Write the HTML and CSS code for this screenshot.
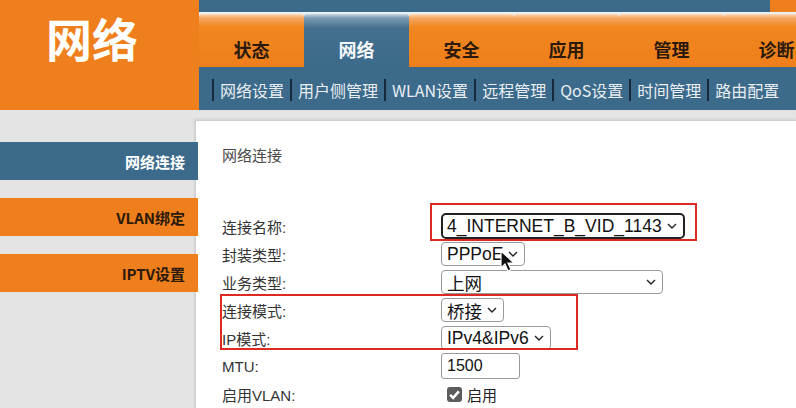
FILE: index.html
```html
<!DOCTYPE html>
<html lang="zh-CN">
<head>
    <meta charset="UTF-8">
    <title>网络</title>
    <link rel="stylesheet" href="styles.css">
</head>
<body>
    <!-- Header: logo block + main tabs + sub menu -->
    <header class="top">
        <div class="logo">网络</div>
        <div class="nav">
            <div class="nav-strip"><span class="strip-corner"></span></div>
            <ul class="tabs">
                <li class="tab">状态</li>
                <li class="tab active">网络</li>
                <li class="tab">安全</li>
                <li class="tab">应用</li>
                <li class="tab">管理</li>
                <li class="tab">诊断</li>
            </ul>
            <ul class="subnav">
                <li>网络设置</li>
                <li>用户侧管理</li>
                <li>WLAN设置</li>
                <li>远程管理</li>
                <li>QoS设置</li>
                <li>时间管理</li>
                <li>路由配置</li>
            </ul>
        </div>
    </header>

    <div class="main">
        <!-- Left menu -->
        <ul class="side">
            <li class="side-item current">网络连接</li>
            <li class="side-item">VLAN绑定</li>
            <li class="side-item">IPTV设置</li>
        </ul>

        <!-- Form panel -->
        <div class="panel">
            <h3 class="panel-title">网络连接</h3>
            <div class="form">
                <div class="row">
                    <span class="label">连接名称:</span>
                    <div class="select focus">4_INTERNET_B_VID_1143<svg class="chev" viewBox="0 0 10 6"><path d="M1 1l4 4 4-4"/></svg></div>
                </div>
                <div class="row">
                    <span class="label">封装类型:</span>
                    <div class="select">PPPoE<svg class="chev" viewBox="0 0 10 6"><path d="M1 1l4 4 4-4"/></svg></div>
                </div>
                <div class="row">
                    <span class="label">业务类型:</span>
                    <div class="select wide">上网<svg class="chev" viewBox="0 0 10 6"><path d="M1 1l4 4 4-4"/></svg></div>
                </div>
                <div class="row">
                    <span class="label">连接模式:</span>
                    <div class="select">桥接<svg class="chev" viewBox="0 0 10 6"><path d="M1 1l4 4 4-4"/></svg></div>
                </div>
                <div class="row">
                    <span class="label">IP模式:</span>
                    <div class="select">IPv4&amp;IPv6<svg class="chev" viewBox="0 0 10 6"><path d="M1 1l4 4 4-4"/></svg></div>
                </div>
                <div class="row">
                    <span class="label">MTU:</span>
                    <div class="input">1500</div>
                </div>
                <div class="row">
                    <span class="label">启用VLAN:</span>
                    <label class="check"><span class="box"><svg viewBox="0 0 12 12"><path d="M2.5 6.3l2.4 2.4 4.6-5.2"/></svg></span>启用</label>
                </div>
            </div>
        </div>
    </div>

    <!-- Annotation boxes and mouse pointer drawn over the screenshot -->
    <div class="mark mark-name"></div>
    <div class="mark mark-mode"></div>
    <svg class="pointer" viewBox="0 0 14 22"><path d="M1 1v17l4-4 3 7 3-1.4-3-6.6h6z"/></svg>
</body>
</html>
```

FILE: styles.css
```css
/* Page */
body {
    margin: 0;
    width: 796px;
    height: 408px;
    overflow: hidden;
    background: #e4e4e4;
    font-family: "Liberation Sans", "Noto Sans CJK SC", sans-serif;
    color: #333;
    position: relative;
}

ul {
    list-style: none;
    margin: 0;
    padding: 0;
}

/* Header */
.top {
    display: flex;
    height: 110px;
}

.logo {
    width: 199px;
    flex-shrink: 0;
    background: #ef7f1c;
    color: #fff;
    font-family: "Noto Sans CJK SC", sans-serif;
    font-size: 46px;
    font-weight: bold;
    line-height: 1;
    padding: 14px 0 0 46px;
    box-sizing: border-box;
}

.nav {
    flex: 1;
    background: #3c6a8b;
    display: flex;
    flex-direction: column;
    min-width: 0;
}

.nav-strip {
    height: 12px;
    display: flex;
    justify-content: flex-end;
}

.strip-corner {
    width: 26px;
    background: #ef7f1c;
}

.tabs {
    display: flex;
    height: 55px;
    background: #eaf0f4;
    padding-top: 2px;
    box-sizing: border-box;
}

.tab {
    width: 105px;
    flex-shrink: 0;
    display: flex;
    justify-content: center;
    align-items: flex-end;
    padding-bottom: 5px;
    box-sizing: border-box;
    font-family: "Noto Sans CJK SC", sans-serif;
    font-size: 18px;
    font-weight: bold;
    color: #2b1a0c;
    background: linear-gradient(#fbd9b8 0, #f4a864 4px, #f0871f 13px, #ef7f1c 100%);
    border-radius: 3px 3px 0 0;
}

.tab.active {
    color: #f4f7fa;
    background: linear-gradient(#c9d7e2 0, #7b9bb3 4px, #44708f 14px, #3c6a8b 100%);
}

.subnav {
    flex: 1;
    display: flex;
    align-items: center;
    padding-left: 13px;
    font-family: "Noto Sans CJK SC", sans-serif;
    font-size: 16px;
    color: #e9eef2;
    white-space: nowrap;
}

.subnav li {
    border-left: 2px solid #15293a;
    padding: 0 6px;
    line-height: 22px;
    margin-top: 2px;
}

/* Body */
.main {
    display: flex;
    padding-top: 10px;
}

.side {
    width: 195px;
    flex-shrink: 0;
    padding-top: 22px;
    position: relative;
    z-index: 1;
}

.side-item {
    width: 198px;
    height: 38px;
    margin-bottom: 18px;
    display: flex;
    align-items: center;
    justify-content: flex-end;
    padding-right: 13px;
    box-sizing: border-box;
    background: #ef7f1c;
    color: #2b1a0c;
    font-family: "Noto Sans CJK SC", sans-serif;
    font-size: 15px;
    font-weight: bold;
}

.side-item.current {
    background: #3c6a8b;
    color: #fff;
}

.panel {
    flex: 1;
    height: 300px;
    background: #fff;
    border-left: 1px solid #cfcfcf;
    border-top: 1px solid #cfcfcf;
    box-shadow: -1px -1px 2px rgba(0, 0, 0, 0.08);
    padding: 0 0 0 26px;
}

.panel-title {
    margin: 24px 0 0;
    font-size: 15px;
    font-weight: normal;
    color: #4a4a4a;
    font-family: "Noto Sans CJK SC", sans-serif;
    line-height: 20px;
}

.form {
    margin-top: 47px;
}

.row {
    display: flex;
    align-items: center;
    height: 28px;
}

.label {
    width: 219px;
    flex-shrink: 0;
    font-size: 15px;
    color: #333;
}

.select,
.input {
    height: 24px;
    box-sizing: border-box;
    border: 1px solid #9a9a9a;
    border-radius: 4px;
    background: #fff;
    display: flex;
    align-items: center;
    padding: 0 6px 0 5px;
    font-size: 17.5px;
    color: #111;
    white-space: nowrap;
}

.select.focus {
    height: 26px;
    border: 2px solid #222;
    border-radius: 5px;
    padding-left: 4px;
}

.select.wide {
    width: 222px;
    justify-content: space-between;
}

.chev {
    width: 10px;
    height: 6px;
    margin-left: 5px;
    fill: none;
    stroke: #222;
    stroke-width: 1.4;
}

.input {
    width: 79px;
    height: 26px;
    border-radius: 3px;
    font-size: 16px;
}

.check {
    display: flex;
    align-items: center;
    padding-left: 6px;
    font-size: 15px;
    color: #222;
}

.box {
    width: 15px;
    height: 15px;
    border-radius: 3px;
    background: #5c5c5c;
    margin-right: 5px;
    display: flex;
}

.box svg {
    width: 15px;
    height: 15px;
    fill: none;
    stroke: #fff;
    stroke-width: 2;
}

/* Overlays */
.mark {
    position: absolute;
    border: 2px solid #dc2a22;
}

.mark-name {
    left: 430px;
    top: 203px;
    width: 263px;
    height: 34px;
}

.mark-mode {
    left: 220px;
    top: 294px;
    width: 354px;
    height: 52px;
}

.pointer {
    position: absolute;
    left: 500px;
    top: 250px;
    width: 14px;
    height: 22px;
    fill: #111;
    stroke: #fff;
    stroke-width: 1.2;
}
```
